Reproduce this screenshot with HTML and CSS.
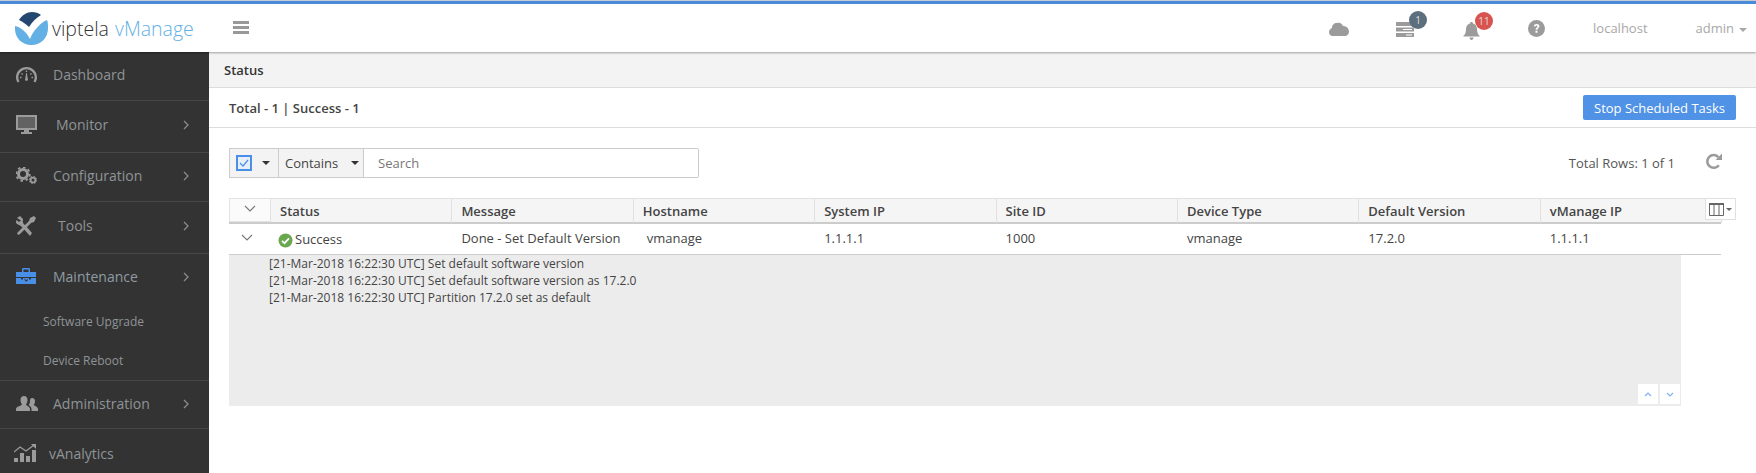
FILE: index.html
```html
<!DOCTYPE html>
<html lang="en">
<head>
    <meta charset="UTF-8">
    <meta name="viewport" content="width=device-width, initial-scale=1.0">
    <title>vManage - Status</title>
    <link rel="stylesheet" href="styles.css">
</head>
<body>
    <header class="topbar">
        <div class="logo">
            <svg class="logo-mark" width="33" height="33" viewBox="0 0 33 33">
                <path d="M0 14 C5 15 11 19 15 27 C18 19 25 11 32 8 C33 10 33 13 33 16 C33 26 26 33 16.500 33 C7 33 0 26 0 17Z" fill="#62b0e4"/>
                <path d="M4 8 C7 3 12 0 17 0 C20 0 24 1 26 3 C21 6 17 10 14 15 C11 12 8 10 4 8Z" fill="#24476f"/>
            </svg>
            <span class="logo-name">viptela</span>
            <span class="logo-product">vManage</span>
        </div>
        <div class="hamburger"><span></span><span></span><span></span></div>
        <div class="top-actions">
            <svg class="top-cloud" width="20" height="14" viewBox="0 0 20 14"><path d="M4 14 C1 14 0 12 0 10 C0 8 1 7 3 6 C3 3 5 1 8 1 C10 0 13 1 14 4 C17 4 20 6 20 10 C20 12 18 14 16 14Z" fill="#9b9b9b"/></svg>
            <div class="top-icon top-tasks">
                <svg width="18" height="15" viewBox="0 0 18 15"><path d="M0 0H18V4H0ZM0 5.500H18V9.500H0ZM0 11H18V15H0Z" fill="#9b9b9b"/><path d="M7 7H16V8H7ZM10 12.500H16V13.500H10Z" fill="#fff"/></svg>
                <span class="badge badge-slate">1</span>
            </div>
            <div class="top-icon top-bell">
                <svg width="17" height="18" viewBox="0 0 17 18"><path d="M8.500 0C9.500 0 10 .7 10 1.500C12.500 2.200 14 4.500 14 7C14 11 15 12.500 17 14.500H0C2 12.500 3 11 3 7C3 4.500 4.500 2.200 7 1.500C7 .7 7.500 0 8.500 0ZM6.500 15.500H10.500C10.500 17 9.500 18 8.500 18C7.500 18 6.500 17 6.500 15.500Z" fill="#9b9b9b"/></svg>
                <span class="badge badge-red">11</span>
            </div>
            <svg class="top-help" width="17" height="17" viewBox="0 0 17 17"><circle cx="8.500" cy="8.500" r="8.500" fill="#9b9b9b"/><path d="M5.800 6.300C6 4.800 7.100 4 8.600 4C10.200 4 11.400 4.900 11.400 6.300C11.400 8.100 9.400 8.200 9.400 9.800H7.600C7.600 7.500 9.400 7.500 9.400 6.400C9.400 5.900 9.100 5.600 8.500 5.600C8 5.600 7.700 5.900 7.600 6.500ZM7.500 10.800H9.500V12.800H7.500Z" fill="#fff"/></svg>
            <span class="top-host">localhost</span>
            <span class="top-user">admin<i class="caret caret-light"></i></span>
        </div>
    </header>

    <div class="page">
        <nav class="sidebar">
            <div class="nav-item nav-dash">
                <span class="nav-icon"><svg width="21" height="16" viewBox="0 0 21 16"><path d="M10.500 0C4.700 0 0 4.500 0 10.300C0 12.300 .5 14 1.500 15.500L3.500 14.500C2.700 13 2.300 11.700 2.300 10.300C2.300 6 6.200 2.200 10.500 2.200C14.800 2.200 18.700 6 18.700 10.300C18.700 11.700 18.300 13 17.500 14.500L19.500 15.500C20.500 14 21 12.300 21 10.300C21 4.500 16.300 0 10.500 0Z" fill="#9b9b9b"/><path d="M4 10.500H5.500M5.500 6.500L6.700 7.500M10.500 3.500V5M15.500 6.500L14.300 7.500M15.500 10.500H17" stroke="#9b9b9b" stroke-width="1.400"/><path d="M10.100 6H10.900L11.700 11.500A1.500 1.500 0 1 1 9.300 11.500Z" fill="#9b9b9b"/></svg></span>
                <span>Dashboard</span>
            </div>
            <div class="nav-item nav-monitor">
                <span class="nav-icon"><svg width="21" height="19" viewBox="0 0 21 19"><path d="M0 0H21V15H0ZM2 2V13H19V2ZM8 15H13V17H16V19H5V17H8Z" fill="#9b9b9b" fill-rule="evenodd"/><rect x="2" y="2" width="17" height="11" fill="#9b9b9b" opacity=".45"/></svg></span>
                <span>Monitor</span>
                <svg class="chevron" width="6" height="10" viewBox="0 0 6 10"><path d="M1 1L5 5L1 9" fill="none" stroke="#8c8c8c" stroke-width="1.300"/></svg>
            </div>
            <div class="nav-item nav-config">
                <span class="nav-icon"><svg width="21" height="17" viewBox="0 0 21 17"><circle cx="7" cy="7" r="4.500" fill="none" stroke="#9b9b9b" stroke-width="3"/><circle cx="7" cy="7" r="6.800" fill="none" stroke="#9b9b9b" stroke-width="1.800" stroke-dasharray="2.600 2.700"/><circle cx="17" cy="13" r="2.400" fill="none" stroke="#9b9b9b" stroke-width="1.800"/><circle cx="17" cy="13" r="3.700" fill="none" stroke="#9b9b9b" stroke-width="1" stroke-dasharray="1.500 1.400"/></svg></span>
                <span>Configuration</span>
                <svg class="chevron" width="6" height="10" viewBox="0 0 6 10"><path d="M1 1L5 5L1 9" fill="none" stroke="#8c8c8c" stroke-width="1.300"/></svg>
            </div>
            <div class="nav-item nav-tools">
                <span class="nav-icon"><svg width="20" height="20" viewBox="0 0 20 20"><path d="M1 2L4 0L7 3C7 5 6 7 9 9L16 17L14 20L6 11C4 9 2 9 0 7C0 6 0 5 .5 4L3 6L5 4.500Z" fill="#9b9b9b"/><path d="M2 16L13 5L14 2L18 0L20 2L18 6L15 7L4 18L2.500 19L1 17.500Z" fill="#9b9b9b"/></svg></span>
                <span>Tools</span>
                <svg class="chevron" width="6" height="10" viewBox="0 0 6 10"><path d="M1 1L5 5L1 9" fill="none" stroke="#8c8c8c" stroke-width="1.300"/></svg>
            </div>
            <div class="nav-group">
                <div class="nav-item nav-maint">
                    <span class="nav-icon"><svg width="20" height="16" viewBox="0 0 20 16"><path d="M0 4H6V1.500C6 .5 6.500 0 7.500 0H12.500C13.500 0 14 .5 14 1.500V4H20V9H0ZM7.500 1.500V4H12.500V1.500ZM0 10H5V11.500H7V10H13V11.500H15V10H20V16H0Z" fill="#4a8fe7" fill-rule="evenodd"/><path d="M8 10L10 12L12 11L11.500 13L9.500 13.500Z" fill="#333"/></svg></span>
                    <span class="nav-text">Maintenance</span>
                    <svg class="chevron" width="6" height="10" viewBox="0 0 6 10"><path d="M1 1L5 5L1 9" fill="none" stroke="#8c8c8c" stroke-width="1.300"/></svg>
                </div>
                <div class="nav-sub">Software Upgrade</div>
                <div class="nav-sub">Device Reboot</div>
            </div>
            <div class="nav-item nav-admin">
                <span class="nav-icon"><svg width="22" height="15" viewBox="0 0 22 15"><path d="M8 0C10.500 0 11.500 2 11.500 4C11.500 6 10.500 7.500 10 8.500C10.500 10 14 10.500 14 13V15H0V13C0 10.500 5 10 6 8.500C5.500 7.500 4.500 6 4.500 4C4.500 2 5.500 0 8 0Z" fill="#9b9b9b"/><path d="M16 2C18 2 19 3.500 19 5.500C19 7 18.200 8.200 17.800 9C18.500 10 22 10.500 22 13V15H15.500V13C15.500 11 14 10 12.500 9C13.500 8 14 7 14 5C14 3.500 14.500 2 16 2Z" fill="#9b9b9b"/></svg></span>
                <span>Administration</span>
                <svg class="chevron" width="6" height="10" viewBox="0 0 6 10"><path d="M1 1L5 5L1 9" fill="none" stroke="#8c8c8c" stroke-width="1.300"/></svg>
            </div>
            <div class="nav-item nav-analytics">
                <span class="nav-icon"><svg width="22" height="18" viewBox="0 0 22 18"><path d="M0 8L6 3L12 7L20 1" fill="none" stroke="#9b9b9b" stroke-width="1.300"/><path d="M17 0H22V5Z" fill="#9b9b9b"/><path d="M0 14H4V18H0ZM6 9H10V18H6ZM12 12H16V18H12ZM18 6H22V18H18Z" fill="#9b9b9b"/></svg></span>
                <span>vAnalytics</span>
            </div>
        </nav>

        <main class="content">
            <div class="title-bar">Status</div>
            <div class="summary-bar">
                <span>Total - 1 | Success - 1</span>
                <button type="button" class="btn-stop">Stop Scheduled Tasks</button>
            </div>

            <div class="grid-wrap">
                <div class="toolbar">
                    <div class="search-group">
                        <div class="select-box select-check">
                            <span class="check-box"><svg width="10" height="8" viewBox="0 0 10 8"><path d="M1 4L4 7L9 1" fill="none" stroke="#4a8fe7" stroke-width="1.200"/></svg></span>
                            <i class="caret"></i>
                        </div>
                        <div class="select-box select-contains">
                            <span>Contains</span>
                            <i class="caret"></i>
                        </div>
                        <input class="search-input" type="text" placeholder="Search">
                    </div>
                    <span class="rows-total">Total Rows: 1 of 1</span>
                    <svg class="refresh" width="17" height="17" viewBox="0 0 16 16"><path d="M13 11.500A6 6 0 1 1 12.500 3.800" fill="none" stroke="#9b9b9b" stroke-width="2.400"/><path d="M10 6.500H16V0.500Z" fill="#9b9b9b"/></svg>
                </div>

                <div class="table">
                    <div class="thead">
                        <div class="th th-toggle"><svg width="12" height="7" viewBox="0 0 12 7"><path d="M1 1L6 6L11 1" fill="none" stroke="#777" stroke-width="1.100"/></svg></div>
                        <div class="th">Status</div>
                        <div class="th">Message</div>
                        <div class="th">Hostname</div>
                        <div class="th">System IP</div>
                        <div class="th">Site ID</div>
                        <div class="th">Device Type</div>
                        <div class="th">Default Version</div>
                        <div class="th">vManage IP</div>
                        <div class="col-picker">
                            <svg width="15" height="13" viewBox="0 0 15 13"><path d="M.5 1.500V12.500H14.500V1.500M5 1.500V12.500M10 1.500V12.500" fill="none" stroke="#666"/><rect width="15" height="2" fill="#666"/></svg>
                            <i class="caret caret-small"></i>
                        </div>
                    </div>
                    <div class="tr">
                        <div class="td td-toggle"><svg width="12" height="7" viewBox="0 0 12 7"><path d="M1 1L6 6L11 1" fill="none" stroke="#777" stroke-width="1.100"/></svg></div>
                        <div class="td td-status">
                            <svg width="15" height="15" viewBox="0 0 15 15"><circle cx="7.500" cy="7.500" r="7" fill="#69a84f"/><path d="M4 7.800L6.500 10.200L11 5.300" fill="none" stroke="#fff" stroke-width="1.800"/></svg>
                            Success
                        </div>
                        <div class="td">Done - Set Default Version</div>
                        <div class="td">vmanage</div>
                        <div class="td">1.1.1.1</div>
                        <div class="td">1000</div>
                        <div class="td">vmanage</div>
                        <div class="td">17.2.0</div>
                        <div class="td">1.1.1.1</div>
                    </div>
                </div>

                <div class="detail">
                    <div class="detail-log">
                        <div>[21-Mar-2018 16:22:30 UTC] Set default software version</div>
                        <div>[21-Mar-2018 16:22:30 UTC] Set default software version as 17.2.0</div>
                        <div>[21-Mar-2018 16:22:30 UTC] Partition 17.2.0 set as default</div>
                    </div>
                    <div class="detail-nav">
                        <span><svg width="8" height="5" viewBox="0 0 8 5"><path d="M1 4L4 1L7 4" fill="none" stroke="#7fb0f0" stroke-width="1.200"/></svg></span>
                        <span><svg width="8" height="5" viewBox="0 0 8 5"><path d="M1 1L4 4L7 1" fill="none" stroke="#7fb0f0" stroke-width="1.200"/></svg></span>
                    </div>
                </div>
            </div>
        </main>
    </div>
</body>
</html>
```

FILE: styles.css
```css
* {
    box-sizing: border-box;
}
html, body {
    margin: 0;
    height: 473px;
    overflow: hidden;
}
body {
    font-family: "Open Sans", Arial, sans-serif;
    font-size: 13px;
    color: #444;
    background-color: #fff;
}

/* top bar */
.topbar {
    display: flex;
    align-items: center;
    height: 52px;
    border-top: 1px solid #c4ccd6;
    box-shadow: inset 0 3px 0 #4a8ad8, 0 1px 2px rgba(0, 0, 0, .35);
    position: relative;
    z-index: 2;
    background-color: #fff;
    padding: 3px 0 0 15px;
}
.logo {
    display: flex;
    align-items: center;
    width: 218px;
    font-size: 19.500px;
    font-weight: 300;
}
.logo-mark {
    margin-right: 4px;
}
.logo-name {
    color: #333;
    margin-right: 6px;
}
.logo-product {
    color: #62b0e4;
}
.hamburger {
    width: 16px;
}
.hamburger span {
    display: block;
    height: 3px;
    margin-bottom: 2px;
    background-color: #999;
}
.top-actions {
    display: flex;
    align-items: center;
    margin-left: auto;
    height: 100%;
    color: #a8a8a8;
}
.top-cloud {
    margin: 2px 47px 0 0;
}
.top-icon {
    position: relative;
    display: flex;
}
.top-tasks {
    margin-top: 2px;
    margin-right: 49px;
}
.top-bell {
    margin-top: 6px;
    margin-right: 48px;
}
.top-help {
    margin-right: 48px;
}
.top-host {
    margin-right: 48px;
}
.top-user {
    margin-right: 9px;
}
.badge {
    position: absolute;
    top: -11px;
    left: 13px;
    width: 18px;
    height: 18px;
    border-radius: 50%;
    color: #ddd;
    font-size: 10px;
    line-height: 18px;
    text-align: center;
}
.badge-slate {
    background-color: #5c6f7e;
}
.badge-red {
    top: -10px;
    left: 12px;
    background-color: #d9534f;
}
.caret {
    display: inline-block;
    width: 0;
    height: 0;
    border-left: 4px solid transparent;
    border-right: 4px solid transparent;
    border-top: 4px solid #333;
}
.caret-light {
    border-top-color: #a8a8a8;
    margin-left: 5px;
    vertical-align: 1px;
}
.caret-small {
    border-left-width: 3px;
    border-right-width: 3px;
    border-top-width: 3px;
    border-top-color: #666;
}

/* page */
.page {
    display: flex;
    height: 421px;
}

/* sidebar */
.sidebar {
    width: 209px;
    flex-shrink: 0;
    background-color: #333;
    color: #8f9497;
    font-size: 14px;
}
.nav-item {
    display: flex;
    align-items: center;
    padding: 0 20px 3px 16px;
    height: 49px;
    border-bottom: 1px solid #474747;
}
.nav-icon {
    display: flex;
    width: 37px;
    flex-shrink: 0;
}
.chevron {
    margin-left: auto;
}
.nav-monitor {
    height: 52px;
    padding-bottom: 4px;
}
.nav-monitor .nav-icon {
    margin-right: 3px;
}
.nav-config {
    height: 49px;
    padding-bottom: 3px;
}
.nav-tools {
    height: 52px;
    padding-bottom: 4px;
}
.nav-tools .nav-icon {
    margin-right: 5px;
}
.nav-group {
    height: 127px;
    border-bottom: 1px solid #474747;
}
.nav-maint {
    height: 46px;
    border-bottom: 0;
    padding-bottom: 2px;
}
.nav-text {
    color: #8f9ba3;
}
.nav-maint .chevron {
    margin-top: 2px;
}
.nav-sub {
    height: 39px;
    padding: 4px 0 0 43px;
    font-size: 12px;
    line-height: 36px;
}
.nav-admin {
    height: 48px;
    padding-bottom: 2px;
}
.nav-analytics {
    height: 45px;
    border-bottom: 0;
    padding-top: 3px;
    padding-bottom: 0;
}
.nav-analytics .nav-icon {
    width: 33px;
    margin-left: -2px;
    margin-right: 2px;
}

/* content */
.content {
    flex: 1;
    min-width: 0;
}
.title-bar {
    height: 36px;
    padding-left: 15px;
    background-color: #f3f3f3;
    border-bottom: 1px solid #ddd;
    color: #333;
    font-weight: 600;
    line-height: 36px;
}
.summary-bar {
    display: flex;
    align-items: center;
    justify-content: space-between;
    height: 40px;
    padding: 0 20px;
    border-bottom: 1px solid #ddd;
    color: #444;
    font-weight: 600;
}
.btn-stop {
    width: 153px;
    height: 25px;
    padding: 0;
    border: 0;
    border-radius: 2px;
    background-color: #4f92e6;
    color: #fff;
    font-family: inherit;
    font-size: 13px;
}
.grid-wrap {
    padding: 20px 20px 0;
}
.toolbar {
    display: flex;
    align-items: center;
    height: 30px;
}
.search-group {
    display: flex;
    height: 30px;
}
.select-box {
    display: flex;
    align-items: center;
    height: 100%;
    border: 1px solid #ccc;
    background-color: #f3f3f3;
    color: #444;
}
.select-check {
    width: 50px;
    padding-left: 6px;
}
.check-box {
    display: flex;
    align-items: center;
    justify-content: center;
    width: 16px;
    height: 16px;
    border: 2px solid #4a8fe7;
    background-color: #e6eef8;
    margin-right: 10px;
}
.select-contains {
    width: 85px;
    padding-left: 6px;
    border-left: 0;
    justify-content: space-between;
    padding-right: 4px;
}
.search-input {
    width: 335px;
    height: 100%;
    padding: 0 14px;
    border: 1px solid #ccc;
    border-left: 0;
    border-radius: 0 2px 2px 0;
    font-family: inherit;
    font-size: 13px;
    outline: none;
}
.search-input::placeholder {
    color: #777;
}
.rows-total {
    margin-left: auto;
    margin-right: 30px;
    color: #555;
}
.refresh {
    margin-right: 14px;
    margin-top: -4px;
}

.table {
    width: 1492px;
    margin-top: 20px;
}
.thead,
.tr {
    display: grid;
    grid-template-columns: 42px repeat(8, 181.400px);
}
.thead {
    position: relative;
    height: 26px;
    border-bottom: 2px solid #ccc;
    background-color: #f5f5f5;
    border-top: 1px solid #e2e2e2;
}
.th {
    padding-left: 9px;
    border-right: 1px solid #e0e0e0;
    color: #444;
    font-weight: 600;
    line-height: 24px;
}
.th-toggle {
    display: flex;
    align-items: center;
    justify-content: center;
    padding: 0 0 4px;
    height: 23px;
    border: 1px solid #e2e2e2;
    border-top: 0;
    background-color: #fbfbfb;
}
.col-picker {
    position: absolute;
    top: -1px;
    right: -15px;
    display: flex;
    align-items: center;
    gap: 2px;
    width: 31px;
    height: 22px;
    padding-left: 3px;
    border: 1px solid #e0e0e0;
    background-color: #fff;
}
.tr {
    height: 31px;
    border-bottom: 1px solid #ccc;
}
.td {
    padding-left: 9px;
    line-height: 29px;
    color: #444;
}
.td:nth-child(4) {
    padding-left: 13px;
}
.td-toggle {
    display: flex;
    align-items: center;
    justify-content: center;
    padding: 0 7px 4px 0;
}
.td-status {
    display: flex;
    align-items: center;
    gap: 2px;
    padding-left: 7px;
}
.td-status svg {
    margin-top: 2px;
}
.detail {
    position: relative;
    width: 1452px;
    height: 151px;
    padding: 0 0 0 40px;
    background-color: #ececec;
    color: #444;
    font-size: 12px;
    line-height: 17px;
}
.detail-nav {
    position: absolute;
    right: 1px;
    bottom: 2px;
    display: flex;
    gap: 2px;
}
.detail-nav span {
    display: flex;
    align-items: center;
    justify-content: center;
    width: 20px;
    height: 20px;
    background-color: #fff;
}
```
